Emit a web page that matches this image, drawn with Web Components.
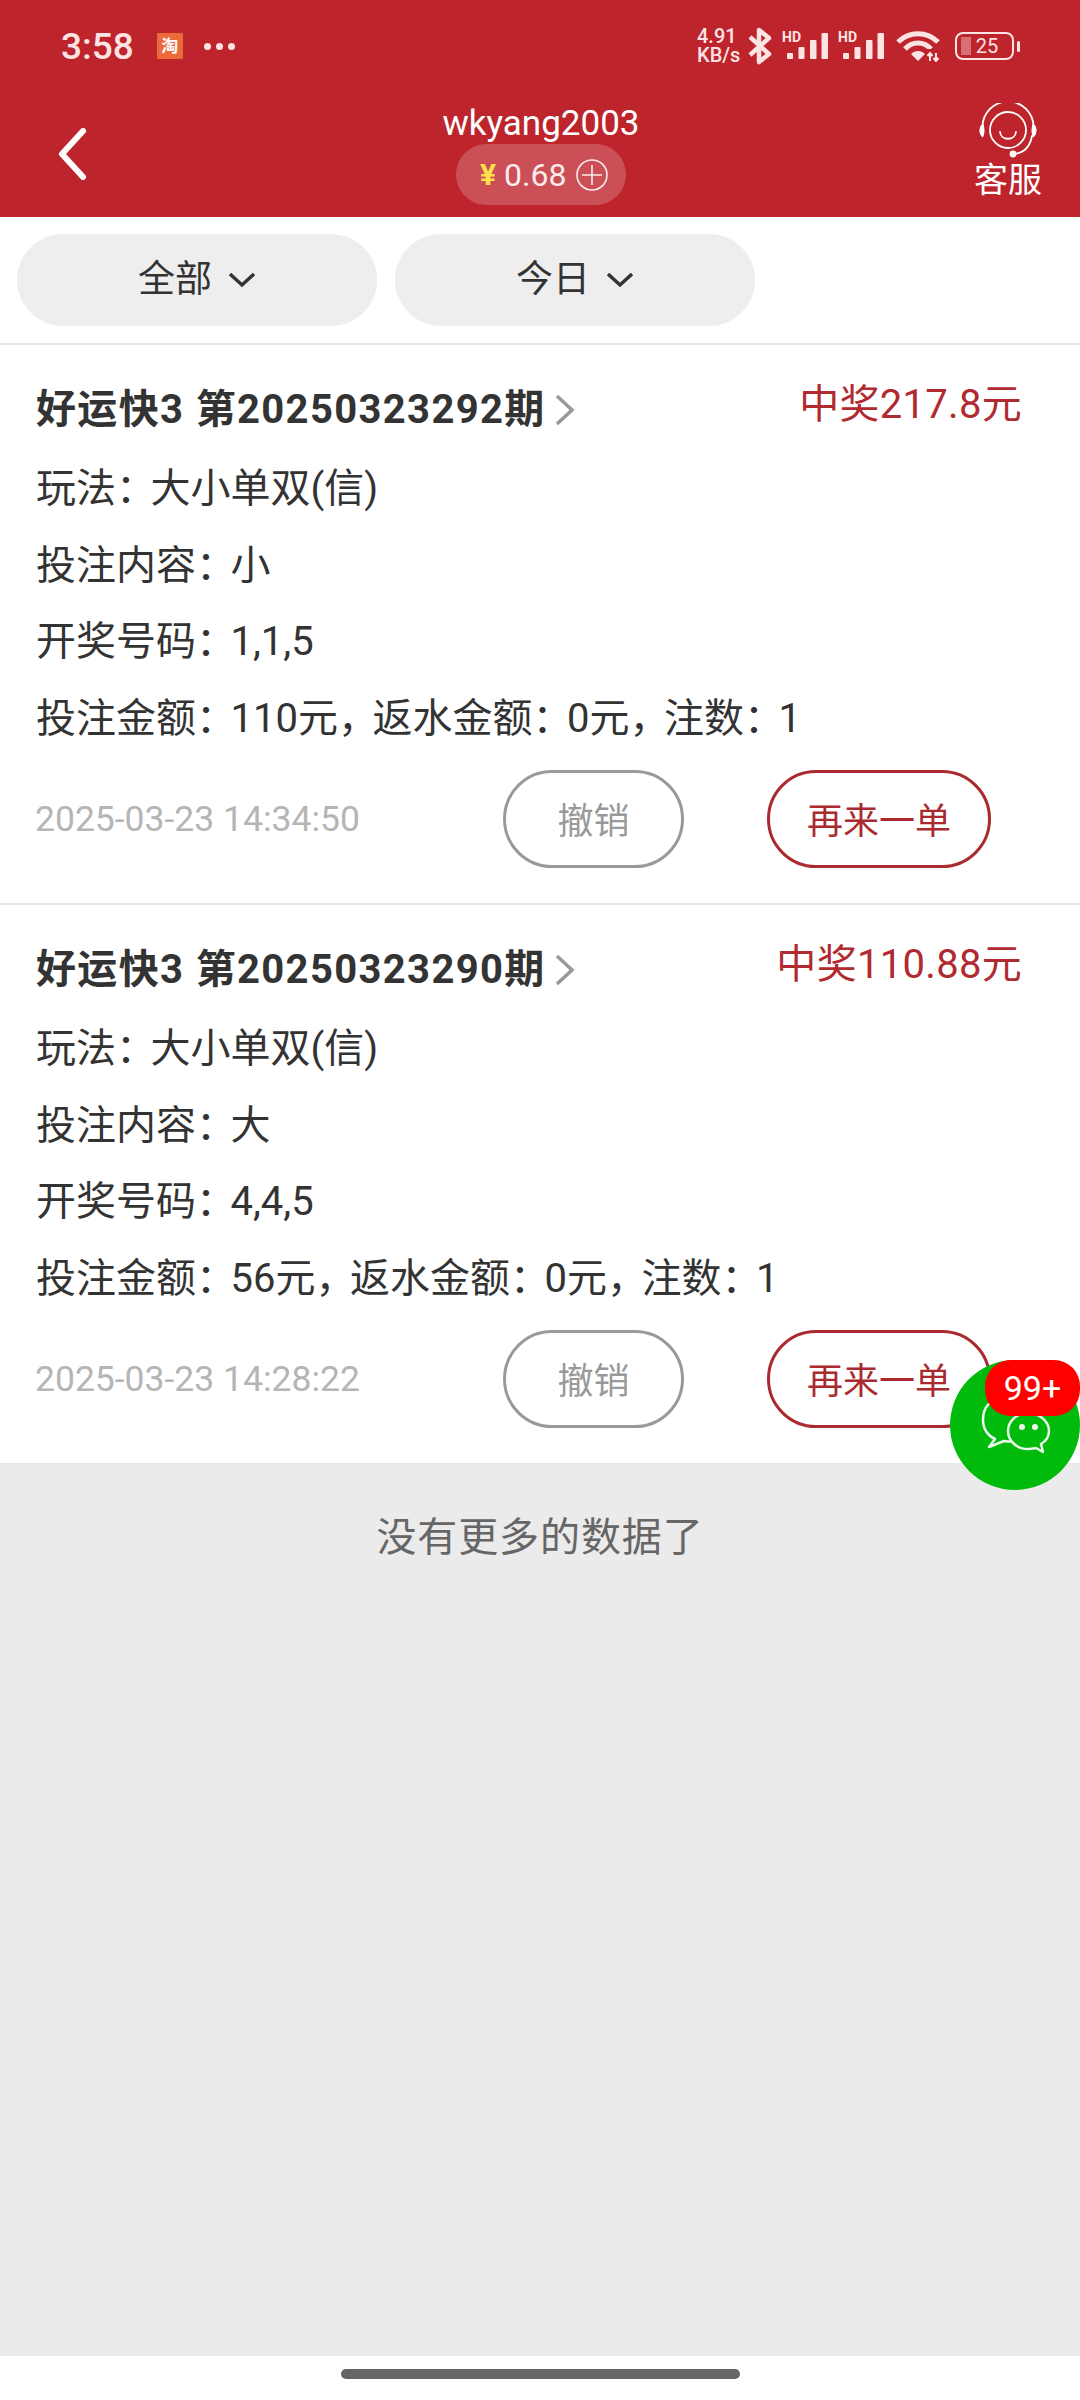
<!DOCTYPE html>
<html lang="zh-CN">
<head>
<meta charset="utf-8">
<title>投注记录</title>
<style>
    html, body {
        margin: 0;
        padding: 0;
        background: #fff;
        font-family: Roboto, 'Noto Sans CJK SC', sans-serif;
    }

    body {
        width: 1080px;
        height: 2400px;
        display: flex;
        flex-direction: column;
        position: relative;
        overflow: hidden;
    }
</style>
</head>
<body>
<app-header></app-header>
<filter-bar></filter-bar>
<bet-card title-text="好运快3 第20250323292期" prize="中奖217.8元" content="小" numbers="1,1,5" amount="110" time="2025-03-23 14:34:50"></bet-card>
<bet-card title-text="好运快3 第20250323290期" prize="中奖110.88元" content="大" numbers="4,4,5" amount="56" time="2025-03-23 14:28:22"></bet-card>
<no-more></no-more>
<home-bar></home-bar>
<chat-fab></chat-fab>

<script>
class StatusBar extends HTMLElement {
    constructor() {
        super();
        this.shadowDOM = this.attachShadow({ mode: 'open' });
        this.render();
    }

    signal() {
        return `
            <span class="signal">
                <b>HD</b>
                <svg width="42" height="27" viewBox="0 0 42 27" fill="#fde3e3">
                    <rect x="0" y="20" width="6" height="6" rx="1"/>
                    <rect x="11.5" y="14" width="6" height="12" rx="1"/>
                    <rect x="23" y="7" width="6.5" height="19" rx="1"/>
                    <rect x="34.5" y="0" width="6.5" height="26" rx="1"/>
                </svg>
            </span>`;
    }

    render() {
        this.shadowDOM.innerHTML = `
            <style>
                :host {
                    display: flex;
                    align-items: center;
                    height: 92px;
                    padding: 0 60px 0 61px;
                    color: #fde3e3;
                    box-sizing: border-box;
                }

                .time {
                    font-size: 37px;
                    font-weight: 500;
                }

                .app {
                    width: 26px;
                    height: 26px;
                    margin-left: 23px;
                    background: #ea6a3c;
                    color: #fff;
                    font-size: 17px;
                    font-weight: 700;
                    line-height: 26px;
                    text-align: center;
                    border-radius: 1px;
                }

                .dots {
                    display: flex;
                    gap: 5px;
                    margin-left: 21px;
                }

                .dots i {
                    width: 7px;
                    height: 7px;
                    background: #fde3e3;
                    border-radius: 50%;
                }

                .right {
                    margin-left: auto;
                    display: flex;
                    align-items: center;
                }

                .speed {
                    font-size: 20px;
                    font-weight: 500;
                    line-height: 19px;
                    width: 43px;
                }

                .bt {
                    margin-left: 8px;
                }

                .signal {
                    position: relative;
                    width: 47px;
                    height: 32px;
                    margin-left: 10px;
                }

                .signal + .signal {
                    margin-left: 9px;
                }

                .signal b {
                    position: absolute;
                    left: 0;
                    top: -1px;
                    font-size: 14px;
                    line-height: 16px;
                    font-weight: 700;
                }

                .signal svg {
                    position: absolute;
                    left: 5px;
                    top: 3px;
                }

                .wifi {
                    margin-left: 11px;
                }

                .battery {
                    position: relative;
                    margin-left: 15px;
                    width: 59px;
                    height: 28px;
                    border: 2.5px solid #fde3e3;
                    border-radius: 8px;
                    box-sizing: border-box;
                    display: flex;
                    align-items: center;
                    justify-content: center;
                    font-size: 20px;
                    line-height: 1;
                    padding-left: 5px;
                }

                .battery::before {
                    content: '';
                    position: absolute;
                    left: 4px;
                    top: 3px;
                    bottom: 3px;
                    width: 10px;
                    background: rgba(253, 227, 227, 0.4);
                }

                .cap {
                    width: 3px;
                    height: 11px;
                    margin-left: 3px;
                    background: #fde3e3;
                    border-radius: 2px;
                }
            </style>

            <span class="time">3:58</span>
            <span class="app">淘</span>
            <span class="dots"><i></i><i></i><i></i></span>
            <div class="right">
                <span class="speed">4.91<br>KB/s</span>
                <svg class="bt" width="24" height="38" viewBox="0 0 24 38" fill="none" stroke="#fde3e3" stroke-width="4.5" stroke-linejoin="round">
                    <path d="M2 10 L21 27 L11 35 V3 L21 11 L2 28"/>
                </svg>
                ${this.signal()}
                ${this.signal()}
                <svg class="wifi" width="44" height="32" viewBox="0 0 44 32" fill="none" stroke="#fde3e3" stroke-width="5">
                    <path d="M2 12 C13 1 31 1 42 12"/>
                    <path d="M9 19 C16 11 28 11 35 19"/>
                    <path d="M22 31 L15 24 C19 20 25 20 29 24 Z" fill="#fde3e3" stroke="none"/>
                    <path d="M30 19 H44 V32 H30 Z" fill="#bd242c" stroke="none"/>
                    <path d="M34 31 V24 M31.5 26 L34 23 L36.5 26 M40 23 V30 M37.5 28 L40 31 L42.5 28" stroke-width="2"/>
                </svg>
                <span class="battery">25</span>
                <span class="cap"></span>
            </div>
        `;
    }
}

class AppHeader extends HTMLElement {
    constructor() {
        super();
        this.shadowDOM = this.attachShadow({ mode: 'open' });
        this.render();
    }

    render() {
        this.shadowDOM.innerHTML = `
            <style>
                :host {
                    display: block;
                    height: 217px;
                    background: #bd242c;
                    color: #fff;
                }

                .nav {
                    display: grid;
                    grid-template-columns: 1fr auto 1fr;
                    height: 125px;
                }

                .back {
                    padding: 36px 0 0 58px;
                }

                .center {
                    display: flex;
                    flex-direction: column;
                    align-items: center;
                    padding-left: 2px;
                }

                .name {
                    font-size: 35px;
                    line-height: 41px;
                    margin-top: 11px;
                }

                .balance {
                    display: flex;
                    align-items: center;
                    width: 170px;
                    height: 61px;
                    box-sizing: border-box;
                    padding-left: 24px;
                    background: rgba(255, 255, 255, 0.2);
                    border-radius: 31px;
                    font-size: 32px;
                    color: #fbeaea;
                }

                .yen {
                    color: #ffe14d;
                    margin-right: 8px;
                    font-size: 30px;
                    font-weight: 700;
                }

                .balance svg {
                    margin-left: 10px;
                }

                .service {
                    justify-self: end;
                    display: flex;
                    flex-direction: column;
                    align-items: center;
                    padding: 11px 38px 0 0;
                }

                .service span {
                    font-size: 34px;
                    line-height: 42px;
                }
            </style>

            <status-bar></status-bar>
            <div class="nav">
                <div class="back">
                    <svg width="30" height="52" viewBox="0 0 30 52" fill="none" stroke="#fff" stroke-width="6" stroke-linecap="round" stroke-linejoin="round">
                        <path d="M25 3 L4 26 L25 49"/>
                    </svg>
                </div>
                <div class="center">
                    <div class="name">wkyang2003</div>
                    <div class="balance">
                        <span class="yen">¥</span>0.68
                        <svg width="32" height="32" viewBox="0 0 32 32" fill="none" stroke="#fbeaea" stroke-width="1.6">
                            <circle cx="16" cy="16" r="15"/>
                            <path d="M16 6 V26 M6 16 H26"/>
                        </svg>
                    </div>
                </div>
                <div class="service">
                    <svg width="58" height="56" viewBox="0 0 58 56" fill="none" stroke="#fff" stroke-width="1.8" stroke-linecap="round">
                        <path d="M3.5 24 A25.5 25.5 0 0 1 54.5 24"/>
                        <circle cx="29" cy="27" r="18"/>
                        <path d="M21 29 C22 38 36 38 37 29"/>
                        <path d="M3.5 22 C0.5 25 0.5 30 3.5 33 C5 30 5 25 3.5 22 Z" fill="#fff"/>
                        <path d="M54.5 22 C57.5 25 57.5 30 54.5 33 C53 30 53 25 54.5 22 Z" fill="#fff"/>
                        <path d="M53 33 C51 44 44 50 35 51"/>
                        <circle cx="34" cy="51" r="2.5" fill="#fff"/>
                    </svg>
                    <span>客服</span>
                </div>
            </div>
        `;
    }
}

class FilterBar extends HTMLElement {
    constructor() {
        super();
        this.shadowDOM = this.attachShadow({ mode: 'open' });
        this.render();
    }

    render() {
        const arrow = `<svg width="28" height="16" viewBox="0 0 28 16" fill="none" stroke="#333" stroke-width="3.5"><path d="M2 2 L14 13 L26 2"/></svg>`;
        this.shadowDOM.innerHTML = `
            <style>
                :host {
                    display: flex;
                    gap: 18px;
                    height: 128px;
                    box-sizing: border-box;
                    padding: 17px 0 0 17px;
                    border-bottom: 2px solid #e8e8e8;
                }

                .pill {
                    display: flex;
                    align-items: center;
                    justify-content: center;
                    gap: 16px;
                    width: 360px;
                    height: 92px;
                    background: #eeeeee;
                    border-radius: 46px;
                    color: #333;
                    font-size: 37px;
                    line-height: 92px;
                }
            </style>

            <div class="pill"><span>全部</span>${arrow}</div>
            <div class="pill"><span>今日</span>${arrow}</div>
        `;
    }
}

class BetCard extends HTMLElement {
    constructor() {
        super();
        this.shadowDOM = this.attachShadow({ mode: 'open' });
    }

    connectedCallback() {
        this.render();
    }

    render() {
        const attr = (name) => this.getAttribute(name);
        const colon = '<span class="c">：</span>';
        const comma = '<span class="c">，</span>';
        this.shadowDOM.innerHTML = `
            <style>
                :host {
                    display: block;
                    height: 560px;
                    box-sizing: border-box;
                    padding: 26px 58px 0 36px;
                    background: #fff;
                    border-bottom: 2px solid #e8e8e8;
                    color: #333;
                    font-size: 40px;
                }

                .head {
                    display: flex;
                    height: 76px;
                    margin-bottom: 4px;
                    line-height: 78px;
                }

                .title {
                    font-weight: 700;
                    letter-spacing: 1.35px;
                }

                .head svg {
                    margin: 23px 0 0 8px;
                }

                .prize {
                    margin: -5px 0 0 auto;
                    color: #b02a30;
                    letter-spacing: 0.3px;
                }

                .row {
                    height: 76.5px;
                    line-height: 76.5px;
                }

                .c {
                    letter-spacing: -5.5px;
                }

                .foot {
                    display: flex;
                    align-items: center;
                    margin-top: 13px;
                    padding-right: 31px;
                }

                .time {
                    flex: 1;
                    margin-left: -1px;
                    color: #b5b5b5;
                    font-size: 35.5px;
                }

                action-button + action-button {
                    margin-left: 83px;
                }
            </style>

            <div class="head">
                <span class="title">${attr('title-text')}</span>
                <svg width="22" height="32" viewBox="0 0 22 32" fill="none" stroke="#999" stroke-width="3.5"><path d="M3 2 L18 16 L3 30"/></svg>
                <span class="prize">${attr('prize')}</span>
            </div>
            <div class="row">玩法${colon}大小单双(信)</div>
            <div class="row">投注内容${colon}${attr('content')}</div>
            <div class="row">开奖号码${colon}${attr('numbers')}</div>
            <div class="row">投注金额${colon}${attr('amount')}元${comma}返水金额${colon}0元${comma}注数${colon}1</div>
            <div class="foot">
                <span class="time">${attr('time')}</span>
                <action-button width="181">撤销</action-button>
                <action-button width="224" tone="red">再来一单</action-button>
            </div>
        `;
    }
}

class ActionButton extends HTMLElement {
    constructor() {
        super();
        this.shadowDOM = this.attachShadow({ mode: 'open' });
    }

    connectedCallback() {
        const red = this.getAttribute('tone') === 'red';
        this.shadowDOM.innerHTML = `
            <style>
                :host {
                    display: flex;
                    align-items: center;
                    justify-content: center;
                    width: ${this.getAttribute('width')}px;
                    height: 98px;
                    box-sizing: border-box;
                    padding-bottom: 2px;
                    border: 3px solid ${red ? '#a92b30' : '#999'};
                    border-radius: 49px;
                    color: ${red ? '#a92b30' : '#999'};
                    font-size: 36px;
                }
            </style>

            <slot></slot>
        `;
    }
}

class NoMore extends HTMLElement {
    constructor() {
        super();
        this.shadowDOM = this.attachShadow({ mode: 'open' });
        this.shadowDOM.innerHTML = `
            <style>
                :host {
                    display: block;
                    flex: 1;
                    padding-top: 48px;
                    background: #ebebeb;
                    color: #666;
                    font-size: 40px;
                    letter-spacing: 0.9px;
                    line-height: 50px;
                    text-align: center;
                }
            </style>

            没有更多的数据了
        `;
    }
}

class HomeBar extends HTMLElement {
    constructor() {
        super();
        this.shadowDOM = this.attachShadow({ mode: 'open' });
        this.shadowDOM.innerHTML = `
            <style>
                :host {
                    display: flex;
                    justify-content: center;
                    height: 44px;
                    box-sizing: border-box;
                    padding-top: 13px;
                    background: #fff;
                }

                div {
                    width: 399px;
                    height: 10px;
                    background: #666;
                    border-radius: 5px;
                }
            </style>

            <div></div>
        `;
    }
}

class ChatFab extends HTMLElement {
    constructor() {
        super();
        this.shadowDOM = this.attachShadow({ mode: 'open' });
        this.shadowDOM.innerHTML = `
            <style>
                :host {
                    position: absolute;
                    left: 950px;
                    top: 1360px;
                    width: 130px;
                    height: 130px;
                    background: #00bb0b;
                    border-radius: 50%;
                }

                svg {
                    display: block;
                }

                .badge {
                    position: absolute;
                    left: 35px;
                    top: 0;
                    width: 95px;
                    height: 56px;
                    background: #f00;
                    border-radius: 26px;
                    color: #fff;
                    font-size: 34px;
                    line-height: 56px;
                    text-align: center;
                }
            </style>

            <svg width="130" height="130" viewBox="0 0 130 130" fill="none" stroke="#e9fbe9" stroke-width="2.5" stroke-linejoin="round">
                <path d="M45 42 C36 42 33 52 33 60 C33 69 38 76 45 79 L39 87 L54 81 C60 82 64 82 68 80"/>
                <path d="M78 53 C66 53 58 62 58 71 C58 81 67 89 78 89 C81 89 84 88 86 88 L93 92 L91 84 C96 81 99 76 99 71 C99 62 90 53 78 53 Z" fill="#00bb0b"/>
                <circle cx="72" cy="67" r="3" fill="#e9fbe9" stroke="none"/>
                <circle cx="85" cy="67" r="3" fill="#e9fbe9" stroke="none"/>
            </svg>
            <div class="badge">99+</div>
        `;
    }
}

customElements.define('status-bar', StatusBar);
customElements.define('app-header', AppHeader);
customElements.define('filter-bar', FilterBar);
customElements.define('action-button', ActionButton);
customElements.define('bet-card', BetCard);
customElements.define('no-more', NoMore);
customElements.define('home-bar', HomeBar);
customElements.define('chat-fab', ChatFab);
</script>
</body>
</html>
